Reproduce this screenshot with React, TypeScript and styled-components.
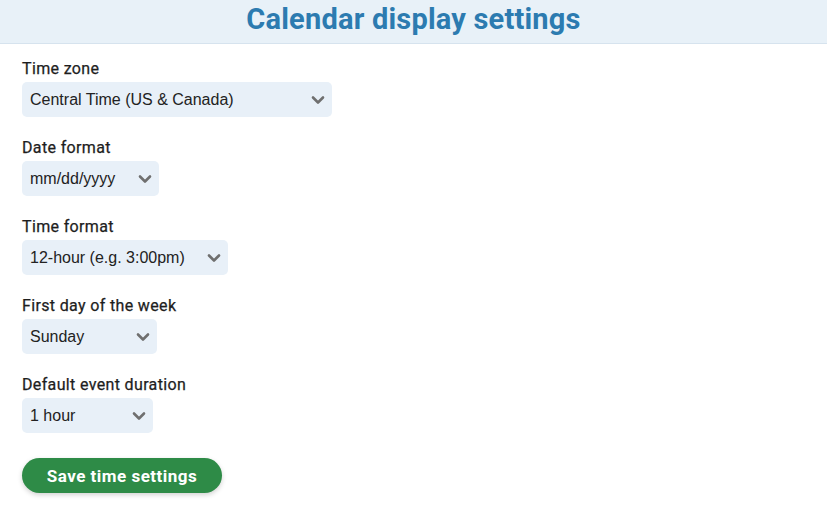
import React from "react";
import styled, { createGlobalStyle } from "styled-components";

const GlobalStyle = createGlobalStyle`
  html, body {
    margin: 0;
    padding: 0;
    background: #ffffff;
    font-family: Roboto, "Noto Sans", sans-serif;
  }
`;

const Page = styled.div`
  width: 827px;
  min-height: 506px;
  background: #ffffff;
`;

const Header = styled.header`
  height: 44px;
  box-sizing: border-box;
  padding-bottom: 5px;
  background: #e8f1f8;
  border-bottom: 1px solid #d6e3ee;
  display: flex;
  align-items: center;
  justify-content: center;
`;

const Title = styled.h1`
  margin: 0;
  font-family: Roboto, sans-serif;
  font-size: 29px;
  line-height: 32px;
  font-weight: 700;
  color: #2c7bb0;
  letter-spacing: 0.2px;
`;

const Form = styled.form`
  display: flex;
  flex-direction: column;
  align-items: flex-start;
  padding: 16px 22px 0;
`;

const Field = styled.div`
  display: flex;
  flex-direction: column;
  align-items: flex-start;
  margin-bottom: 22px;
`;

const Label = styled.label`
  font-family: Roboto, sans-serif;
  font-size: 16px;
  font-weight: 400;
  color: #1e1e1e;
  line-height: 18px;
  letter-spacing: 0.35px;
  margin-bottom: 4px;
  -webkit-text-stroke: 0.25px #1e1e1e;
`;

const SelectBox = styled.div<{ $width: number }>`
  width: ${(p) => p.$width}px;
  height: 35px;
  box-sizing: border-box;
  background: #e8f0f8;
  border-radius: 5px;
  display: flex;
  align-items: center;
  justify-content: space-between;
  padding: 0 7px 0 8px;
  font-family: "Liberation Sans", Arial, sans-serif;
  font-size: 16px;
  color: #222;
`;

const Chevron = () => (
  <svg width="14" height="10" viewBox="0 0 14 10" aria-hidden="true">
    <path
      d="M2 2.5 L7 7.5 L12 2.5"
      fill="none"
      stroke="#6f6f6f"
      strokeWidth="2.6"
      strokeLinecap="round"
      strokeLinejoin="round"
    />
  </svg>
);

const SaveButton = styled.button`
  margin-top: 3px;
  width: 200px;
  height: 35px;
  border: none;
  border-radius: 18px;
  background: #2e8b47;
  color: #ffffff;
  font-family: Roboto, sans-serif;
  font-size: 17px;
  font-weight: 700;
  letter-spacing: 0.5px;
  box-shadow: 0 2px 5px rgba(0, 0, 0, 0.18);
  cursor: pointer;
`;

const fields = [
  { label: "Time zone", value: "Central Time (US & Canada)", width: 310 },
  { label: "Date format", value: "mm/dd/yyyy", width: 137 },
  { label: "Time format", value: "12-hour (e.g. 3:00pm)", width: 206 },
  { label: "First day of the week", value: "Sunday", width: 135 },
  { label: "Default event duration", value: "1 hour", width: 131 },
];

export default function App() {
  return (
    <Page>
      <GlobalStyle />
      <Header>
        <Title>Calendar display settings</Title>
      </Header>
      <Form onSubmit={(e) => e.preventDefault()}>
        {fields.map((f) => (
          <Field key={f.label}>
            <Label>{f.label}</Label>
            <SelectBox $width={f.width}>
              <span>{f.value}</span>
              <Chevron />
            </SelectBox>
          </Field>
        ))}
        <SaveButton type="submit">Save time settings</SaveButton>
      </Form>
    </Page>
  );
}
